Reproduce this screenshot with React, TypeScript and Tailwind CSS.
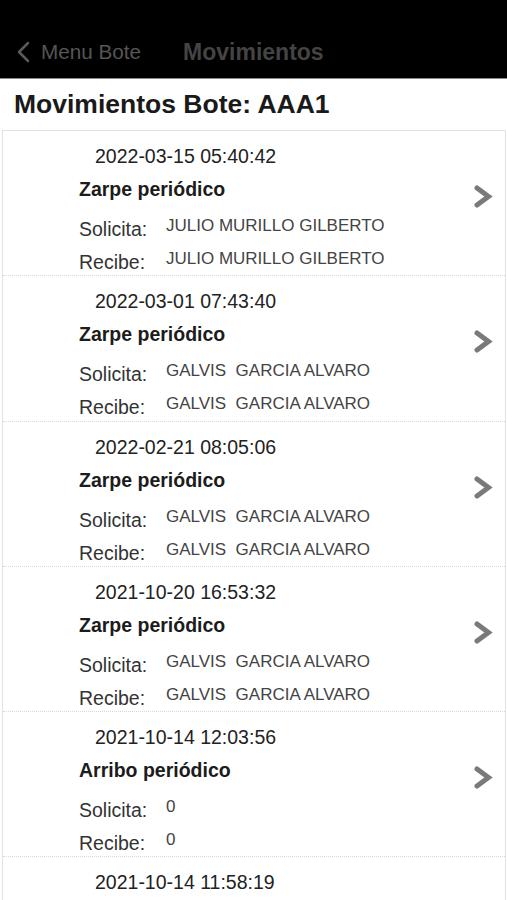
import React from 'react'

type Movimiento = {
    fecha: string,
    tipo: string,
    solicita: string,
    recibe: string
}

const movimientos: Movimiento[] = [
    { fecha: '2022-03-15 05:40:42', tipo: 'Zarpe periódico', solicita: 'JULIO MURILLO GILBERTO', recibe: 'JULIO MURILLO GILBERTO' },
    { fecha: '2022-03-01 07:43:40', tipo: 'Zarpe periódico', solicita: 'GALVIS  GARCIA ALVARO', recibe: 'GALVIS  GARCIA ALVARO' },
    { fecha: '2022-02-21 08:05:06', tipo: 'Zarpe periódico', solicita: 'GALVIS  GARCIA ALVARO', recibe: 'GALVIS  GARCIA ALVARO' },
    { fecha: '2021-10-20 16:53:32', tipo: 'Zarpe periódico', solicita: 'GALVIS  GARCIA ALVARO', recibe: 'GALVIS  GARCIA ALVARO' },
    { fecha: '2021-10-14 12:03:56', tipo: 'Arribo periódico', solicita: '0', recibe: '0' },
    { fecha: '2021-10-14 11:58:19', tipo: 'Zarpe periódico', solicita: '0', recibe: '0' },
]

const Chevron = () => (
    <svg width="20" height="25" viewBox="0 0 20 25" fill="none">
        <polyline points="4,4 15.5,12.5 4,21" stroke="#7a7a7a" strokeWidth="5" strokeLinecap="round" strokeLinejoin="miter" />
    </svg>
)

const Item = ({ m }: { m: Movimiento }) => {
    return <div className="flex h-[145.25px] overflow-hidden border-b border-dotted border-[#d8d8d8]">
        <div className="flex-1 pl-[76px]">
            <div className="mt-[13px] h-[24px] pl-[16px] text-[19.5px] leading-[24px] text-[#222]">{m.fecha}</div>
            <div className="mt-[9px] h-[24px] text-[19.5px] font-bold leading-[24px] text-[#1c1c1c]">{m.tipo}</div>
            <div className="mt-[16px] flex h-[24px] items-start">
                <span className="w-[87px] text-[19.5px] leading-[24px] text-[#333]">Solicita:</span>
                <span className="whitespace-pre text-[17px] leading-[18px] text-[#444]">{m.solicita}</span>
            </div>
            <div className="mt-[9px] flex h-[24px] items-start">
                <span className="w-[87px] text-[19.5px] leading-[24px] text-[#333]">Recibe:</span>
                <span className="whitespace-pre text-[17px] leading-[18px] text-[#444]">{m.recibe}</span>
            </div>
        </div>
        <div className="mr-[12px] mt-[53px]">
            <Chevron />
        </div>
    </div>
}

const App = () => {
    return <div className="min-h-[900px] bg-white" style={{ fontFamily: '"Liberation Sans", Arial, sans-serif' }}>
        <div className="flex h-[79px] items-end border-b border-[#8a8a8a] bg-black pb-[14px]">
            <div className="flex h-[24px] items-center pl-[16px]">
                <svg width="15" height="22" viewBox="0 0 15 22" fill="none">
                    <polyline points="12,2 3,11 12,20" stroke="#5a5a5a" strokeWidth="2.5" strokeLinecap="round" strokeLinejoin="round" />
                </svg>
                <span className="ml-[10px] text-[20.7px] text-[#555]">Menu Bote</span>
                <span className="ml-[42px] text-[23px] font-bold text-[#444]">Movimientos</span>
            </div>
        </div>
        <div className="flex h-[51px] items-center pl-[14px] text-[26.5px] font-bold text-[#1a1a1a]">
            Movimientos Bote: AAA1
        </div>
        <div className="ml-[2px] mr-[1px] border border-[#e2e2e2]">
            {movimientos.map((m, i) => <Item key={i} m={m} />)}
        </div>
    </div>
}

export default App
